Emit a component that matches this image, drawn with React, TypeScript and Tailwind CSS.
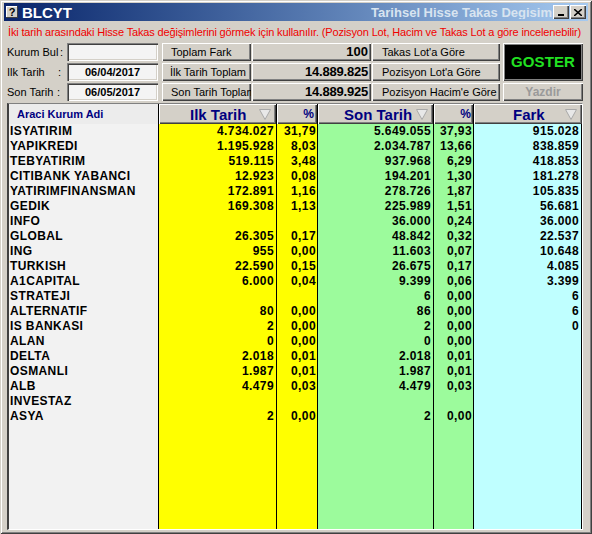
import React from 'react';

type Row = [string, string, string, string, string, string];

const rows: Row[] = [
  ['ISYATIRIM', '4.734.027', '31,79', '5.649.055', '37,93', '915.028'],
  ['YAPIKREDI', '1.195.928', '8,03', '2.034.787', '13,66', '838.859'],
  ['TEBYATIRIM', '519.115', '3,48', '937.968', '6,29', '418.853'],
  ['CITIBANK YABANCI', '12.923', '0,08', '194.201', '1,30', '181.278'],
  ['YATIRIMFINANSMAN', '172.891', '1,16', '278.726', '1,87', '105.835'],
  ['GEDIK', '169.308', '1,13', '225.989', '1,51', '56.681'],
  ['INFO', '', '', '36.000', '0,24', '36.000'],
  ['GLOBAL', '26.305', '0,17', '48.842', '0,32', '22.537'],
  ['ING', '955', '0,00', '11.603', '0,07', '10.648'],
  ['TURKISH', '22.590', '0,15', '26.675', '0,17', '4.085'],
  ['A1CAPITAL', '6.000', '0,04', '9.399', '0,06', '3.399'],
  ['STRATEJI', '', '', '6', '0,00', '6'],
  ['ALTERNATIF', '80', '0,00', '86', '0,00', '6'],
  ['IS BANKASI', '2', '0,00', '2', '0,00', '0'],
  ['ALAN', '0', '0,00', '0', '0,00', ''],
  ['DELTA', '2.018', '0,01', '2.018', '0,01', ''],
  ['OSMANLI', '1.987', '0,01', '1.987', '0,01', ''],
  ['ALB', '4.479', '0,03', '4.479', '0,03', ''],
  ['INVESTAZ', '', '', '', '', ''],
  ['ASYA', '2', '0,00', '2', '0,00', ''],
];

const cols = 'grid grid-cols-[150px_118px_41px_116px_40px_108px]';
const raised =
  'bg-[#d4d0c8] shadow-[inset_1px_1px_0_#ffffff,inset_-1px_-1px_0_#404040,inset_-2px_-2px_0_#808080]';
const sunken =
  'shadow-[inset_1px_1px_0_#808080,inset_2px_2px_0_#404040,inset_-1px_-1px_0_#ffffff,inset_-2px_-2px_0_#d4d0c8]';

function SortArrow() {
  return (
    <svg width="12" height="11" viewBox="0 0 12 11" className="shrink-0">
      <polygon points="0.5,0.5 11.5,0.5 6,10.5" fill="#e8e8e8" stroke="#a8a8a8" strokeWidth="1" />
    </svg>
  );
}

function PanelButton({ children, className = '' }: { children: React.ReactNode; className?: string }) {
  return (
    <div className={`h-[18px] flex items-center ${raised} ${className}`}>
      {children}
    </div>
  );
}

export default function App() {
  return (
    <div className="w-[592px] h-[534px] overflow-hidden bg-[#d4d0c8] font-['Liberation_Sans',Arial,sans-serif] shadow-[inset_1px_1px_0_#d4d0c8,inset_-1px_-1px_0_#404040,inset_2px_2px_0_#ffffff,inset_-2px_-2px_0_#808080] pt-[3px] px-[4px] pb-[4px] flex flex-col">
      {/* title bar */}
      <div className="h-[18px] flex items-center bg-gradient-to-r from-[#0a246a] to-[#a6caf0] pl-[2px] pr-[2px]">
        <div className="w-[12px] h-[12px] bg-[#d4d0c8] flex items-center justify-center text-[11px] font-bold leading-none text-black shadow-[inset_-1px_-1px_0_#404040,inset_1px_1px_0_#ffffff]">
          ?
        </div>
        <span className="ml-[4px] text-[15px] font-bold text-white leading-none">BLCYT</span>
        <div className="flex-1 overflow-hidden flex justify-end">
          <span className="text-[13px] font-bold text-[#d8e4f0] leading-none whitespace-nowrap pr-[1px]">
            Tarihsel Hisse Takas Degisim
          </span>
        </div>
        <div className={`w-[16px] h-[14px] ${raised} flex items-end justify-center pb-[3px]`}>
          <div className="w-[6px] h-[2px] bg-black" />
        </div>
        <div className={`w-[16px] h-[14px] ml-[1px] ${raised} flex items-center justify-center`}>
          <svg width="8" height="7" viewBox="0 0 8 7">
            <path d="M0 0 L8 7 M8 0 L0 7" stroke="#000" strokeWidth="1.6" />
          </svg>
        </div>
      </div>

      {/* info line */}
      <div className="h-[22px] flex items-center pl-[4px] text-[11px] text-[#f00000] whitespace-nowrap tracking-[-0.15px]">
        İki tarih arasındaki Hisse Takas değişimlerini görmek için kullanılır. (Pozisyon Lot, Hacim ve Takas Lot a göre incelenebilir)
      </div>

      {/* controls */}
      <div className="flex pl-[3px] text-[11px] text-black">
        <div className="flex flex-col gap-[2px] w-[60px]">
          <div className="h-[18px] flex items-center justify-between pr-[4px]">
            <span>Kurum Bul</span>
            <span>:</span>
          </div>
          <div className="h-[18px] flex items-center justify-between pr-[6px]">
            <span>Ilk Tarih</span>
            <span>:</span>
          </div>
          <div className="h-[18px] flex items-center justify-between pr-[7px]">
            <span>Son Tarih</span>
            <span>:</span>
          </div>
        </div>
        <div className="flex flex-col gap-[2px] w-[91px]">
          <div className={`h-[18px] bg-[#f4f4f4] ${sunken}`} />
          <div className={`h-[18px] bg-[#f4f4f4] ${sunken} flex items-center justify-center font-bold`}>
            06/04/2017
          </div>
          <div className={`h-[18px] bg-[#f4f4f4] ${sunken} flex items-center justify-center font-bold`}>
            06/05/2017
          </div>
        </div>
        <div className="flex flex-col gap-[2px] w-[89px] ml-[4px]">
          <PanelButton className="pl-[9px]">Toplam Fark</PanelButton>
          <PanelButton className="pl-[8px]">İlk Tarih Toplam</PanelButton>
          <PanelButton className="pl-[9px] overflow-hidden whitespace-nowrap">Son Tarih Toplam</PanelButton>
        </div>
        <div className="flex flex-col gap-[2px] w-[119px] ml-[1px]">
          <PanelButton className="justify-end pr-[3px] text-[13px] font-bold">100</PanelButton>
          <PanelButton className="justify-end pr-[3px] text-[13px] font-bold tracking-[-0.2px]">14.889.825</PanelButton>
          <PanelButton className="justify-end pr-[3px] text-[13px] font-bold tracking-[-0.2px]">14.889.925</PanelButton>
        </div>
        <div className="flex flex-col gap-[2px] w-[128px] ml-[1px]">
          <PanelButton className="pl-[10px]">Takas Lot'a Göre</PanelButton>
          <PanelButton className="pl-[10px]">Pozisyon Lot'a Göre</PanelButton>
          <PanelButton className="pl-[10px]">Pozisyon Hacim'e Göre</PanelButton>
        </div>
        <div className="flex flex-col gap-[2px] w-[80px] ml-[3px]">
          <div className="h-[38px] bg-black flex items-center justify-center shadow-[inset_1px_1px_0_#ffffff,inset_-1px_-1px_0_#404040,inset_2px_2px_0_#808080,inset_-2px_-2px_0_#808080]">
            <span className="text-[15px] font-bold text-[#22e022] tracking-[0.1px]">GOSTER</span>
          </div>
          <div className={`h-[18px] ${raised} flex items-center justify-center text-[12px] font-bold text-[#9a9a9a]`}>
            Yazdir
          </div>
        </div>
      </div>

      {/* grid */}
      <div className="mt-[2px] ml-[3px] w-[576px] flex-1 flex flex-col border-l-2 border-t border-l-[#404040] border-t-[#808080] border-r border-r-white border-b border-b-white overflow-hidden">
        <div className={`${cols} h-[20px]`}>
          <div className="bg-[#ececec] border-r border-black flex items-center pl-[8px] text-[11px] font-bold text-[#000080]">
            Araci Kurum Adi
          </div>
          <div className={`${raised} border-r border-black flex items-center pl-[31px] pr-[5px]`}>
            <span className="flex-1 text-[15px] font-bold text-[#000080] leading-none">Ilk Tarih</span>
            <SortArrow />
          </div>
          <div className={`${raised} border-r border-black flex items-center justify-end pr-[3px] text-[12px] font-bold text-[#000080]`}>
            %
          </div>
          <div className={`${raised} border-r border-black flex items-center pl-[26px] pr-[5px]`}>
            <span className="flex-1 text-[15px] font-bold text-[#000080] leading-none">Son Tarih</span>
            <SortArrow />
          </div>
          <div className={`${raised} border-r border-black flex items-center justify-end pr-[2px] text-[12px] font-bold text-[#000080]`}>
            %
          </div>
          <div className={`${raised} flex items-center pl-[39px] pr-[5px]`}>
            <span className="flex-1 text-[15px] font-bold text-[#000080] leading-none">Fark</span>
            <SortArrow />
          </div>
        </div>

        {rows.map((r) => (
          <div key={r[0]} className={`${cols} h-[15px] text-[12px] font-bold text-black leading-[15px] tracking-[0.4px]`}>
            <div className="bg-[#f2f2f2] border-r border-black pl-[1px] whitespace-nowrap overflow-hidden">{r[0]}</div>
            <div className="bg-[#ffff00] border-r border-black text-right pr-[2px]">{r[1]}</div>
            <div className="bg-[#ffff00] border-r border-black text-right pr-[1px]">{r[2]}</div>
            <div className="bg-[#9cfb9c] border-r border-black text-right pr-[2px]">{r[3]}</div>
            <div className="bg-[#9cfb9c] border-r border-black text-right pr-[1px]">{r[4]}</div>
            <div className="bg-[#bfffff] border-r border-black text-right pr-[2px]">{r[5]}</div>
          </div>
        ))}

        <div className={`${cols} flex-1`}>
          <div className="bg-[#f2f2f2] border-r border-black" />
          <div className="bg-[#ffff00] border-r border-black" />
          <div className="bg-[#ffff00] border-r border-black" />
          <div className="bg-[#9cfb9c] border-r border-black" />
          <div className="bg-[#9cfb9c] border-r border-black" />
          <div className="bg-[#bfffff] border-r border-black" />
        </div>
      </div>
    </div>
  );
}
